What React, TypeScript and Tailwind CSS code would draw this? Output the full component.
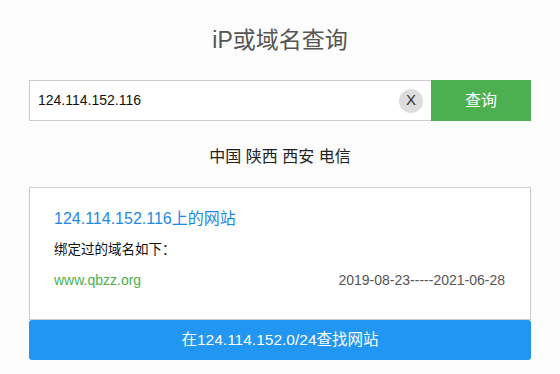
export default function App() {
  return (
    <div
      className="w-[560px] h-[374px] bg-[#fcfcfc] flex flex-col items-center overflow-hidden"
      style={{ fontFamily: '"Liberation Sans", Arial, "Noto Sans CJK SC", sans-serif' }}
    >
      <h1 className="mt-[24px] h-[32px] leading-[32px] text-[23px] text-[#555]">iP或域名查询</h1>
      <div className="mt-[24px] w-[502px] h-[41px] flex">
        <div className="flex-1 flex items-center border border-[#ccc] border-r-0 bg-white pl-[8px] pr-[8px]">
          <span className="flex-1 text-[14px] text-[#111]">124.114.152.116</span>
          <span className="w-[24px] h-[24px] rounded-full bg-[#ddd] flex items-center justify-center text-[15px] text-[#333]">X</span>
        </div>
        <button className="w-[100px] h-[41px] bg-[#4caf50] text-white text-[16px]">查询</button>
      </div>
      <div className="mt-[26px] h-[20px] leading-[20px] text-[16px] text-[#222]">中国 陕西 西安 电信</div>
      <div className="mt-[20px] w-[502px] border border-[#ccc] bg-white pl-[24px] pr-[25px] pt-[20px] pb-[30px]">
        <div className="text-[16px] leading-[22px] text-[#1e88e5]">124.114.152.116上的网站</div>
        <div className="mt-[9px] text-[13.5px] leading-[18px] text-[#111] font-['Noto_Sans_CJK_SC',sans-serif]">绑定过的域名如下：</div>
        <div className="mt-[14px] flex justify-between text-[14px] leading-[18px]">
          <span className="text-[#4caf50]">www.qbzz.org</span>
          <span className="text-[#555]">2019-08-23-----2021-06-28</span>
        </div>
      </div>
      <button className="w-[502px] h-[40px] rounded-[3px] bg-[#2196f3] text-white text-[15.5px]">在124.114.152.0/24查找网站</button>
    </div>
  );
}
